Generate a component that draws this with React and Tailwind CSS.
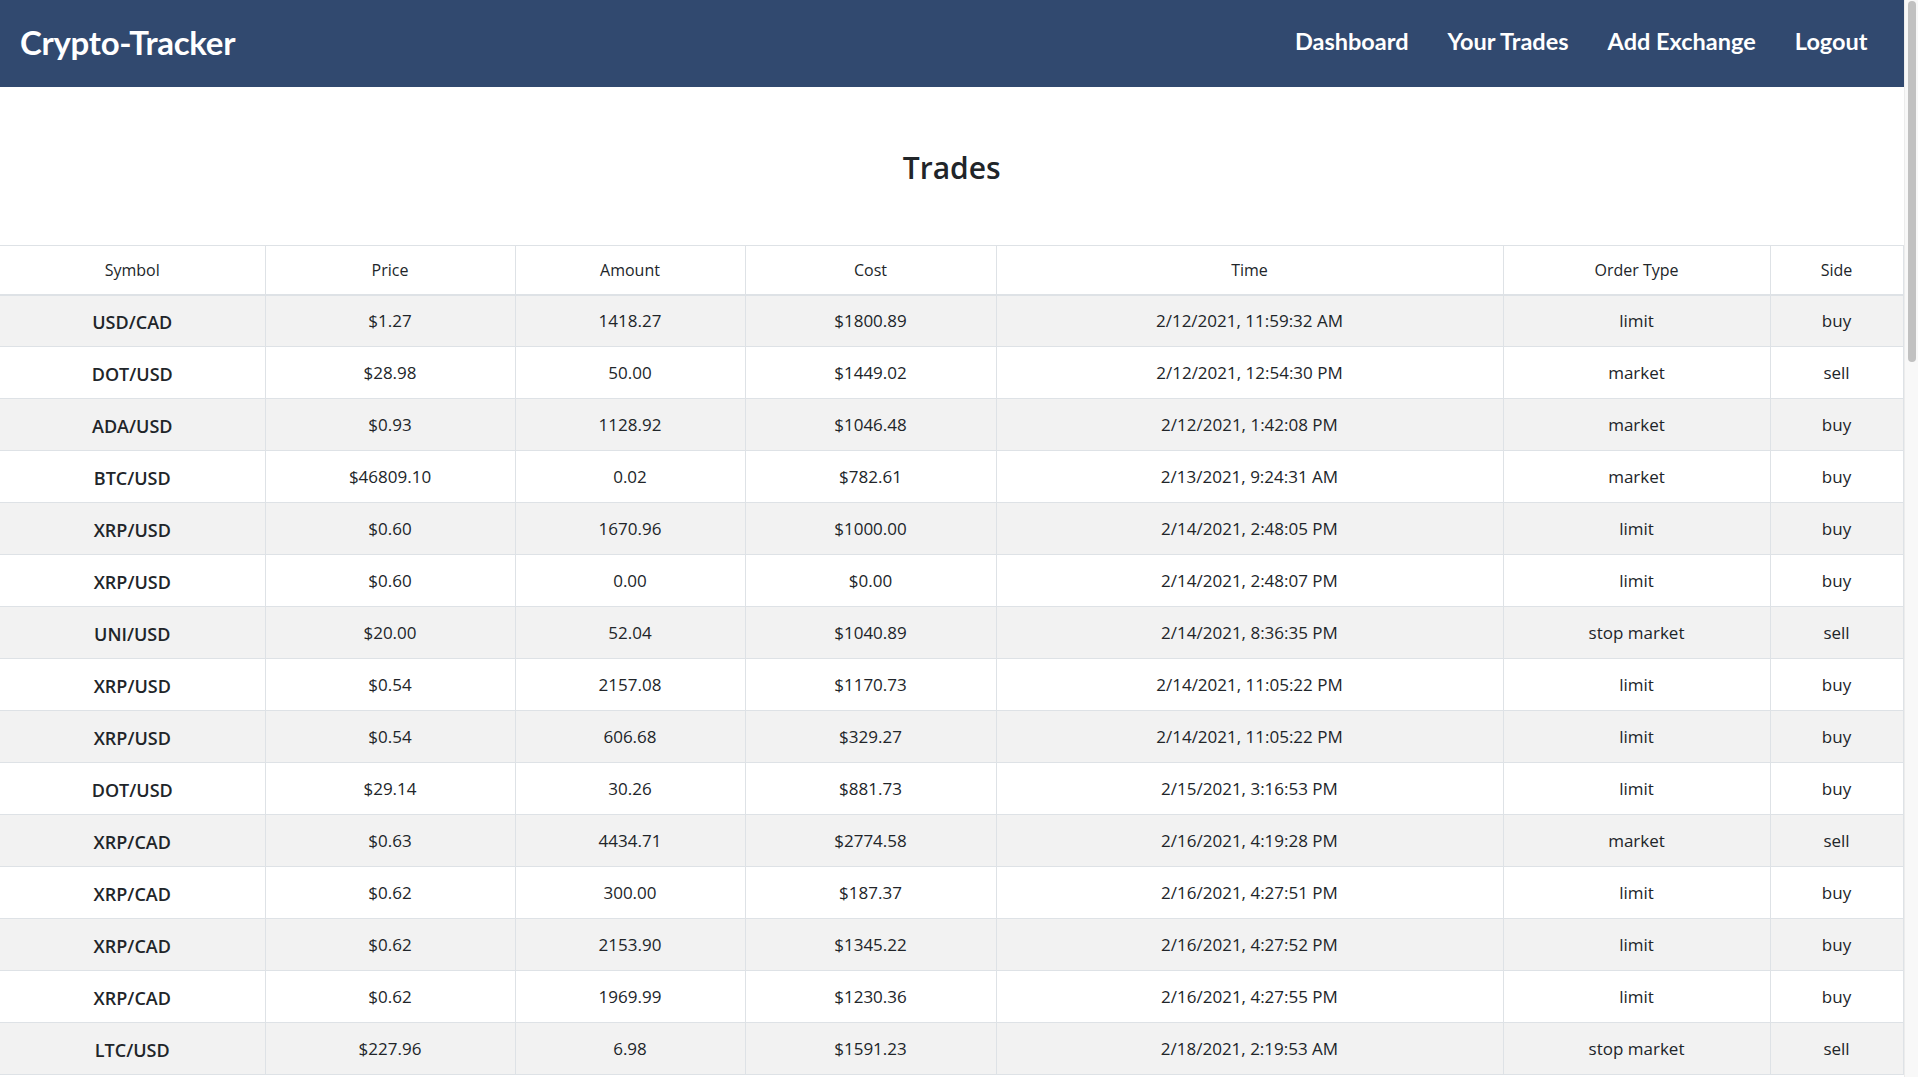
import React from "react";

const trades = [
  ["USD/CAD", "$1.27", "1418.27", "$1800.89", "2/12/2021, 11:59:32 AM", "limit", "buy"],
  ["DOT/USD", "$28.98", "50.00", "$1449.02", "2/12/2021, 12:54:30 PM", "market", "sell"],
  ["ADA/USD", "$0.93", "1128.92", "$1046.48", "2/12/2021, 1:42:08 PM", "market", "buy"],
  ["BTC/USD", "$46809.10", "0.02", "$782.61", "2/13/2021, 9:24:31 AM", "market", "buy"],
  ["XRP/USD", "$0.60", "1670.96", "$1000.00", "2/14/2021, 2:48:05 PM", "limit", "buy"],
  ["XRP/USD", "$0.60", "0.00", "$0.00", "2/14/2021, 2:48:07 PM", "limit", "buy"],
  ["UNI/USD", "$20.00", "52.04", "$1040.89", "2/14/2021, 8:36:35 PM", "stop market", "sell"],
  ["XRP/USD", "$0.54", "2157.08", "$1170.73", "2/14/2021, 11:05:22 PM", "limit", "buy"],
  ["XRP/USD", "$0.54", "606.68", "$329.27", "2/14/2021, 11:05:22 PM", "limit", "buy"],
  ["DOT/USD", "$29.14", "30.26", "$881.73", "2/15/2021, 3:16:53 PM", "limit", "buy"],
  ["XRP/CAD", "$0.63", "4434.71", "$2774.58", "2/16/2021, 4:19:28 PM", "market", "sell"],
  ["XRP/CAD", "$0.62", "300.00", "$187.37", "2/16/2021, 4:27:51 PM", "limit", "buy"],
  ["XRP/CAD", "$0.62", "2153.90", "$1345.22", "2/16/2021, 4:27:52 PM", "limit", "buy"],
  ["XRP/CAD", "$0.62", "1969.99", "$1230.36", "2/16/2021, 4:27:55 PM", "limit", "buy"],
  ["LTC/USD", "$227.96", "6.98", "$1591.23", "2/18/2021, 2:19:53 AM", "stop market", "sell"],
];

const headers = ["Symbol", "Price", "Amount", "Cost", "Time", "Order Type", "Side"];
const widths = ["w-[265px]", "w-[250px]", "w-[230px]", "w-[251px]", "w-[507px]", "w-[267px]", "w-[133px]"];

const Navbar = () => (
  <nav className="flex items-center justify-between h-[87px] bg-[#31496f] pl-[20px] pr-[36px] font-['Lato',sans-serif] font-bold text-white">
    <a className="text-[33px] tracking-[-0.3px] -mt-[2px]">Crypto-Tracker</a>
    <div className="flex items-center gap-[39px] text-[23.5px] -mt-[3px]">
      <a>Dashboard</a>
      <a>Your Trades</a>
      <a>Add Exchange</a>
      <a>Logout</a>
    </div>
  </nav>
);

// the page's own scrollbar, as seen in the screenshot
const Scrollbar = () => (
  <div className="sticky top-0 w-[15px] h-[1077px] shrink-0 bg-[#f8f8f8] border-l border-[#ececec] pt-[1px] pl-[3px]">
    <div className="w-[8px] h-[361px] rounded-full bg-[#c1c1c1]" />
  </div>
);

const App = () => {
  return (
    <div className="flex items-start bg-white">
      <div className="flex-1 min-h-[3135px] text-[#212529] font-['Open_Sans',sans-serif]">
        <Navbar />
        <h2 className="h-[158px] flex items-center justify-center text-[30px] font-semibold pt-[2px]">
          Trades
        </h2>
        <table className="w-full table-fixed border-collapse text-center text-[17px]">
          <thead>
            <tr className="h-[49px]">
              {headers.map((h, i) => (
                <th
                  key={h}
                  className={`${widths[i]} font-normal text-[16px] border border-[#dee2e6] border-b-2 border-l-0`}
                >
                  {h}
                </th>
              ))}
            </tr>
          </thead>
          <tbody>
            {trades.map((t, r) => (
              <tr key={r} className={`h-[52px] ${r % 2 === 0 ? "bg-[#f2f2f2]" : "bg-white"}`}>
                {t.map((c, i) => (
                  <td
                    key={i}
                    className={`border border-[#dee2e6] ${i === 0 ? "border-l-0 font-semibold text-[18px] pt-[3px]" : ""}`}
                  >
                    {c}
                  </td>
                ))}
              </tr>
            ))}
          </tbody>
        </table>
      </div>
      <Scrollbar />
    </div>
  );
};

export default App;
